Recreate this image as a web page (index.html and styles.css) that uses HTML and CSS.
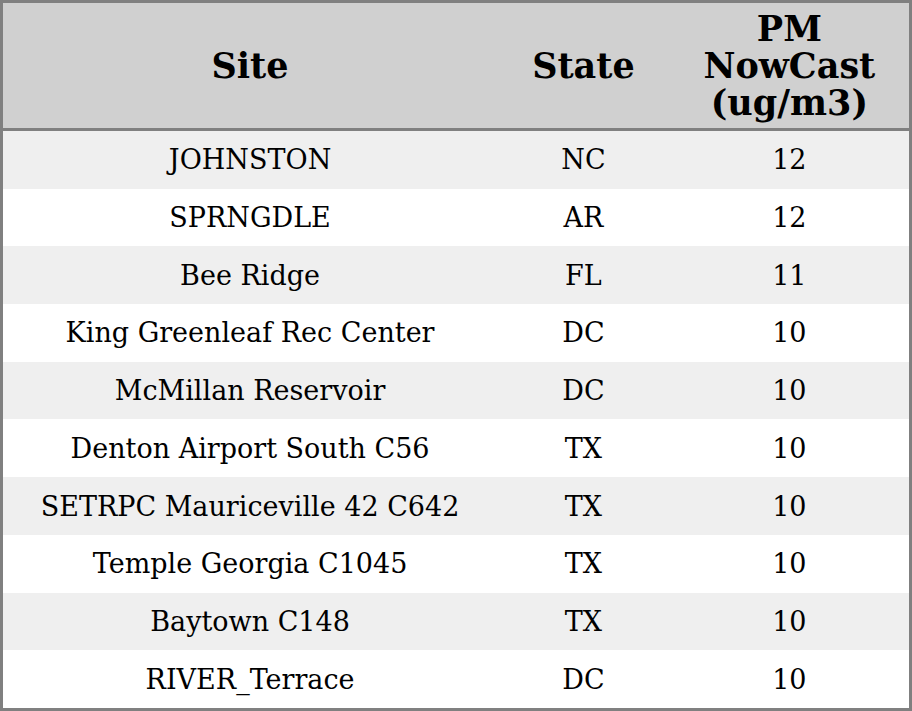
FILE: index.html
```html
<!DOCTYPE html>
<html>
<head>
<meta charset="utf-8">
<link rel="stylesheet" href="styles.css">
</head>
<body>
<table class="aq">
  <colgroup>
    <col class="c-site">
    <col class="c-state">
    <col class="c-pm">
  </colgroup>
  <thead>
    <tr><th>Site</th><th>State</th><th>PM<br>NowCast<br>(ug/m3)</th></tr>
  </thead>
  <tbody>
    <tr><td>JOHNSTON</td><td>NC</td><td>12</td></tr>
    <tr><td>SPRNGDLE</td><td>AR</td><td>12</td></tr>
    <tr><td>Bee Ridge</td><td>FL</td><td>11</td></tr>
    <tr><td>King Greenleaf Rec Center</td><td>DC</td><td>10</td></tr>
    <tr><td>McMillan Reservoir</td><td>DC</td><td>10</td></tr>
    <tr><td>Denton Airport South C56</td><td>TX</td><td>10</td></tr>
    <tr><td>SETRPC Mauriceville 42 C642</td><td>TX</td><td>10</td></tr>
    <tr><td>Temple Georgia C1045</td><td>TX</td><td>10</td></tr>
    <tr><td>Baytown C148</td><td>TX</td><td>10</td></tr>
    <tr><td>RIVER_Terrace</td><td>DC</td><td>10</td></tr>
  </tbody>
</table>
</body>
</html>
```
FILE: styles.css
```css
html, body {
  margin: 0;
  padding: 0;
  background: #ffffff;
}
.aq {
  width: 912px;
  height: 711px;
  border-collapse: collapse;
  table-layout: fixed;
  border: 3px solid #808080;
  font-family: "DejaVu Serif", serif;
  color: #000;
}
.c-site { width: 494px; }
.c-state { width: 172px; }
.c-pm { width: 240px; }
.aq thead tr {
  background: #d0d0d0;
  height: 128px;
}
.aq th {
  font-size: 35px;
  line-height: 37px;
  font-weight: bold;
  text-align: center;
  padding: 0;
  border-bottom: 3px solid #808080;
}
.aq td {
  font-size: 27px;
  text-align: center;
  padding: 0;
  height: 56px;
}
.aq tbody tr:nth-child(odd) { background: #efefef; }
.aq tbody tr:nth-child(even) { background: #ffffff; }
```
